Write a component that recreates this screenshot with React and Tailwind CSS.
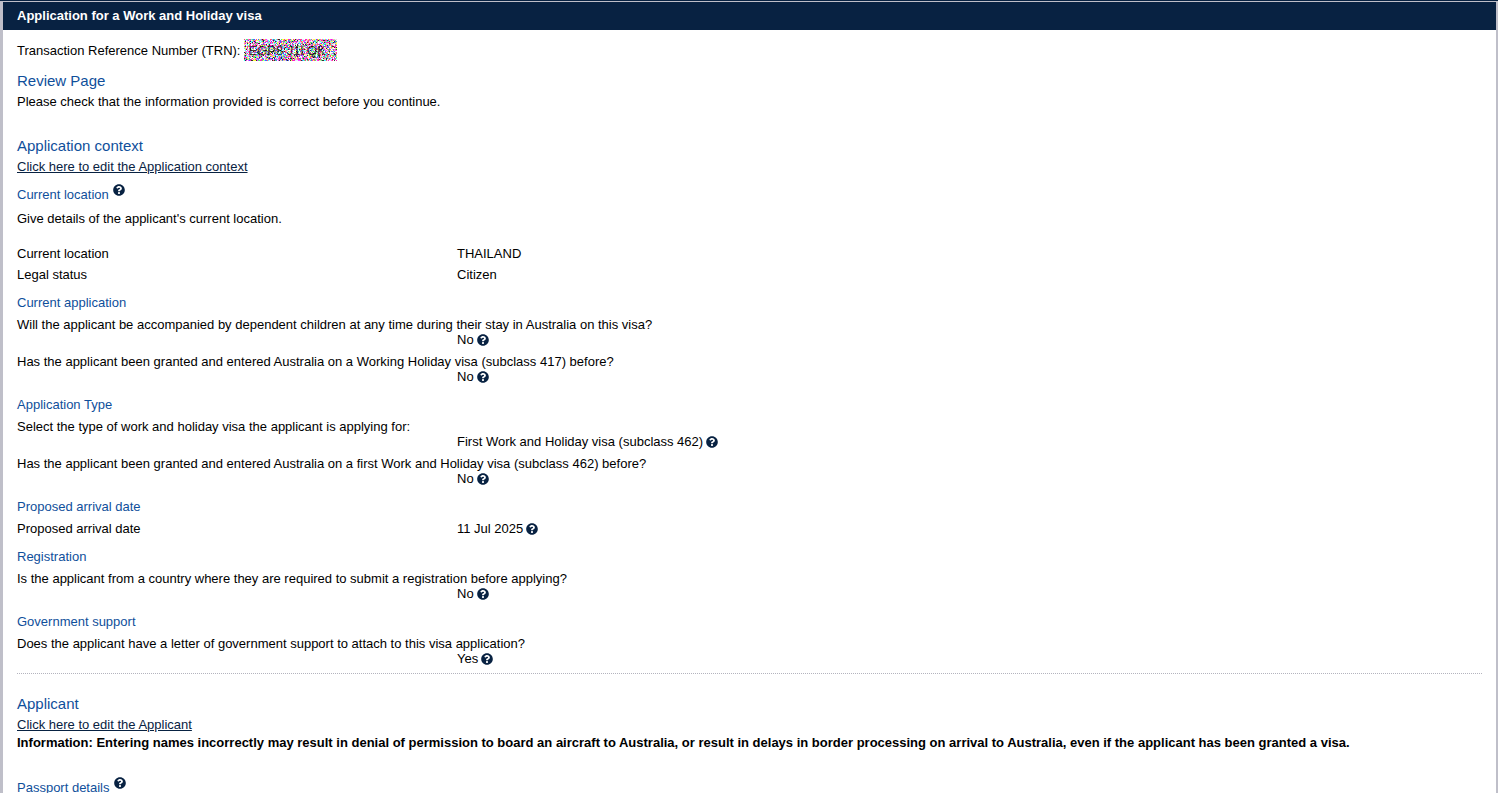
import React from 'react';
import { FaQuestionCircle } from 'react-icons/fa';

const NOISE_COLORS = ['#ffffff', '#ffff40', '#40ffff', '#ff40ff', '#ff5070', '#5060ff', '#50e080', '#303030', '#ffc8e0', '#d8d8a0', '#e0f0ff', '#ff20c0'];
const NOISE_WIDTH = 93;
const NOISE_HEIGHT = 22;

// one path per colour, same result on every render
function buildNoise() {
  const paths = NOISE_COLORS.map(() => '');
  let seed = 4621;
  for (let y = 0; y < NOISE_HEIGHT; y++) {
    for (let x = 0; x < NOISE_WIDTH; x++) {
      seed = (seed * 48271) % 2147483647;
      paths[(seed >> 9) % NOISE_COLORS.length] += `M${x} ${y}h1v1h-1z`;
    }
  }
  return paths;
}

const noise = buildNoise();

const sections = [
  {
    title: 'Current application',
    questions: [
      { q: 'Will the applicant be accompanied by dependent children at any time during their stay in Australia on this visa?', a: 'No' },
      { q: 'Has the applicant been granted and entered Australia on a Working Holiday visa (subclass 417) before?', a: 'No' },
    ],
  },
  {
    title: 'Application Type',
    questions: [
      { q: 'Select the type of work and holiday visa the applicant is applying for:', a: 'First Work and Holiday visa (subclass 462)' },
      { q: 'Has the applicant been granted and entered Australia on a first Work and Holiday visa (subclass 462) before?', a: 'No' },
    ],
  },
  {
    title: 'Proposed arrival date',
    questions: [{ q: 'Proposed arrival date', a: '11 Jul 2025', inline: true }],
  },
  {
    title: 'Registration',
    questions: [{ q: 'Is the applicant from a country where they are required to submit a registration before applying?', a: 'No' }],
  },
  {
    title: 'Government support',
    questions: [{ q: 'Does the applicant have a letter of government support to attach to this visa application?', a: 'Yes' }],
  },
];

function HelpButton() {
  return (
    <button type="button" aria-label="Help" className="text-[#082242]">
      <FaQuestionCircle className="h-3 w-3" />
    </button>
  );
}

function Redacted() {
  return (
    <span className="relative ml-1 inline-block h-[22px] w-[93px] overflow-hidden">
      <svg className="absolute inset-0" width={NOISE_WIDTH} height={NOISE_HEIGHT} shapeRendering="crispEdges" aria-hidden="true">
        {noise.map((d, i) => (
          <path key={NOISE_COLORS[i]} d={d} fill={NOISE_COLORS[i]} />
        ))}
      </svg>
      <span className="absolute left-1 top-1 whitespace-pre opacity-70">EGP8 J1l QK</span>
    </span>
  );
}

function Question({ q, a, inline, help = true }) {
  return (
    <div className={inline ? 'flex' : ''}>
      <dt className={inline ? 'w-[440px]' : ''}>{q}</dt>
      <dd className={inline ? 'flex items-center gap-[3px]' : 'ml-[440px] flex items-center gap-[3px]'}>
        {a}
        {help && <HelpButton />}
      </dd>
    </div>
  );
}

function Heading({ children }) {
  return <h2 className="text-[15px] leading-[20px] text-[#0f4f9b]">{children}</h2>;
}

function SubHeading({ children, help }) {
  return (
    <h3 className="flex gap-1 text-[#0f4f9b]">
      {children}
      {help && (
        <span className="-mt-[3px]">
          <HelpButton />
        </span>
      )}
    </h3>
  );
}

export default function App() {
  return (
    <div className="flex min-h-screen flex-col border-t border-[#082242] bg-white font-['Liberation_Sans',Arial,sans-serif] text-[13px] leading-[15px] text-black">
      <div className="grow border-t border-r-2 border-l-[3px] border-[#bfbfc9]">
        <header className="bg-[#082242] px-[14px] py-[6px] text-white">
          <h1 className="font-bold leading-[16px]">Application for a Work and Holiday visa</h1>
        </header>

        <main className="px-[14px] pt-[9px] pb-4">
          <div className="flex items-center">
            <span>Transaction Reference Number (TRN):</span>
            <Redacted />
          </div>

          <section className="pt-[10px]">
            <Heading>Review Page</Heading>
            <p className="mt-[3px]">Please check that the information provided is correct before you continue.</p>
          </section>

          <section className="mt-[27px]">
            <Heading>Application context</Heading>
            <a href="#context" className="mt-[3px] inline-block text-[#082242] underline">
              Click here to edit the Application context
            </a>

            <div className="mt-[13px]">
              <SubHeading help>Current location</SubHeading>
              <p className="mt-[9px]">Give details of the applicant's current location.</p>
              <dl className="mt-[20px] flex flex-col gap-[6px] pb-[7px]">
                <Question q="Current location" a="THAILAND" inline help={false} />
                <Question q="Legal status" a="Citizen" inline help={false} />
              </dl>
            </div>

            {sections.map((section) => (
              <div key={section.title} className="pt-[6px]">
                <SubHeading>{section.title}</SubHeading>
                <dl className="mt-[7px] flex flex-col gap-[7px] pb-[7px]">
                  {section.questions.map((item) => (
                    <Question key={item.q} {...item} />
                  ))}
                </dl>
              </div>
            ))}
          </section>

          <hr className="border-t border-dotted border-[#b4b4be]" />

          <section className="mt-[20px]">
            <Heading>Applicant</Heading>
            <a href="#applicant" className="mt-[3px] inline-block text-[#082242] underline">
              Click here to edit the Applicant
            </a>
            <p className="mt-[3px] font-bold">
              Information: Entering names incorrectly may result in denial of permission to board an aircraft to Australia, or result
              in delays in border processing on arrival to Australia, even if the applicant has been granted a visa.
            </p>
            <div className="mt-[30px]">
              <SubHeading help>Passport details</SubHeading>
            </div>
          </section>
        </main>
      </div>
    </div>
  );
}
